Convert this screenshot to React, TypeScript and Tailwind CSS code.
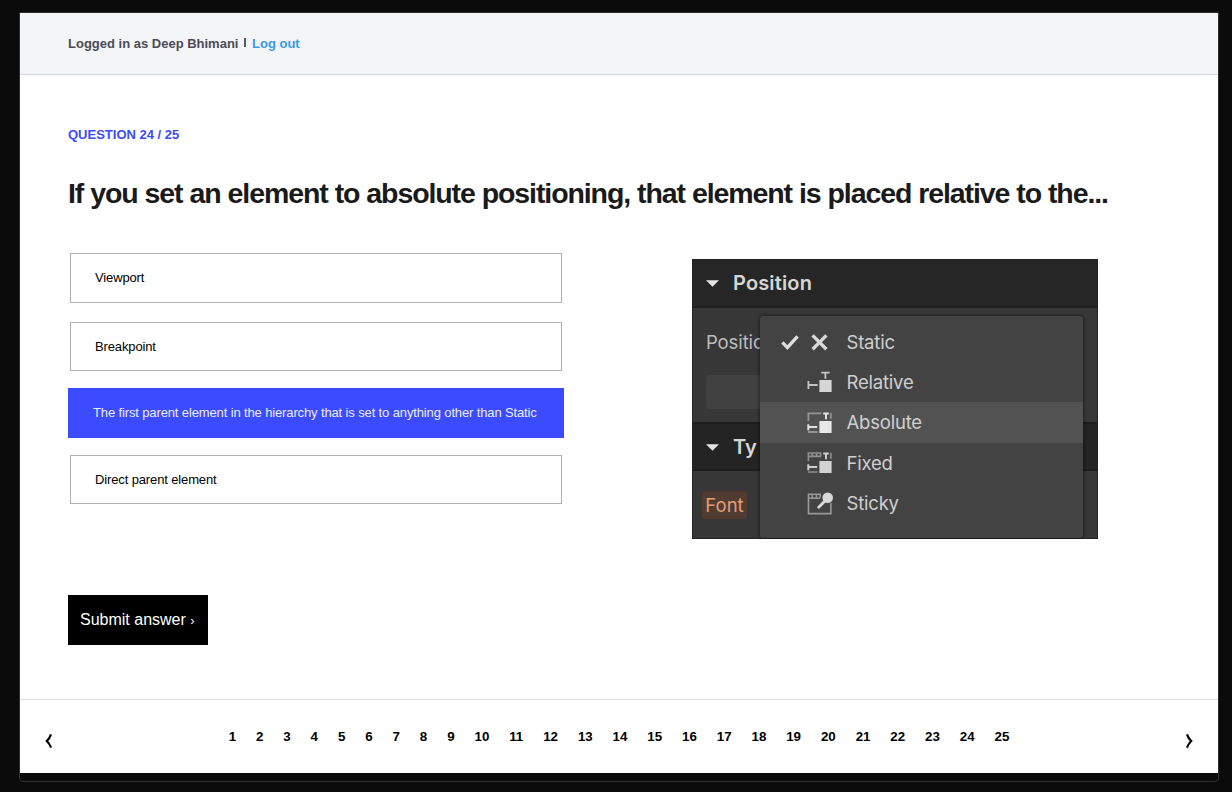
import React from 'react';

const questions = Array.from({ length: 25 }, (_, i) => i + 1);

function RelativeIcon() {
  return (
    <svg width="26" height="24" viewBox="0 0 26 24" fill="none" stroke="#c4c4c4" strokeWidth="1.8">
      <path d="M1.4 10v8M1.2 14h9.4M14.2 1.6h8.4M18.4 1.6v6.2" />
      <rect x="12.4" y="9" width="12.2" height="12" fill="#d6d6d6" stroke="none" />
    </svg>
  );
}

function AbsoluteIcon() {
  return (
    <svg width="26" height="24" viewBox="0 0 26 24" fill="none">
      <path d="M1.4 10V2.3H14.2M1 21h9.6M23.8 1.8v6" stroke="#949494" strokeWidth="1.8" />
      <path d="M1.3 13.2v6M1.2 16h9M16.2 2.4h5.6M19 2.4V8.2" stroke="#e0e0e0" strokeWidth="2" />
      <rect x="12.4" y="10" width="12.2" height="12" fill="#e8e8e8" />
    </svg>
  );
}

function FixedIcon() {
  return (
    <svg width="26" height="24" viewBox="0 0 26 24" fill="none">
      <path d="M1.4 10V2H14.2M1.2 5.4H14.2M5.3 2v3M9.6 2v3M13.6 2v3M1 21h9.6M23.8 1.8v6" stroke="#8f8f8f" strokeWidth="1.7" />
      <path d="M1.3 13.2v6M1.2 16h9M16.2 2.4h5.6M19 2.4V8.2" stroke="#cdcdcd" strokeWidth="2" />
      <rect x="12.4" y="10" width="12.2" height="12" fill="#d2d2d2" />
    </svg>
  );
}

function StickyIcon() {
  return (
    <svg width="26" height="24" viewBox="0 0 26 24" fill="none">
      <path d="M14 2.2H1.5V21.6H23.9V11M1.3 6.2H13M5.3 2.5v3M9.4 2.5v3M13.2 2.5v3" stroke="#989898" strokeWidth="1.6" />
      <path d="M11.7 15.2l7-7" stroke="#d8d8d8" strokeWidth="2.8" strokeLinecap="round" />
      <circle cx="20.7" cy="5.8" r="5.3" fill="#d8d8d8" />
    </svg>
  );
}

function CrossIcon() {
  return (
    <svg width="26" height="24" viewBox="0 0 26 24" fill="none" stroke="#d8d8d8" strokeWidth="3.4">
      <path d="M5.6 4.4l13.8 13.8M19.4 4.4L5.6 18.2" />
    </svg>
  );
}

const options = [
  { label: 'Static', icon: <CrossIcon />, row: 'h-[41px]' },
  { label: 'Relative', icon: <RelativeIcon />, row: 'h-[39px]' },
  { label: 'Absolute', icon: <AbsoluteIcon />, row: 'h-[41px] bg-[#525252]' },
  { label: 'Fixed', icon: <FixedIcon />, row: 'h-[40px]' },
  { label: 'Sticky', icon: <StickyIcon />, row: 'h-[41px]' },
];

function Caret() {
  return (
    <svg width="13" height="7" viewBox="0 0 13 7" className="mt-px shrink-0">
      <path d="M0 0.2h13L6.5 6.8z" fill="#e4e4e4" />
    </svg>
  );
}

function PositionPanel() {
  return (
    <div className="relative mt-[6px] h-[280px] w-[406px] overflow-hidden bg-[#373737] font-['Inter',sans-serif] outline-1 -outline-offset-1 outline-[#242424]">
      <div className="flex h-[49px] items-center gap-[14px] border-b-2 border-[#1f1f1f] bg-[#262626] pl-[14px] text-[20px] font-semibold tracking-[0.15px] text-[#d6d6d6]">
        <Caret />
        <span>Position</span>
      </div>
      <div className="h-[67px] pt-[20px] pl-[14px] text-[18.5px] leading-[28px] tracking-[-0.1px] text-[#bdbdbd]">Position</div>
      <div className="ml-[14px] h-[34px] w-[200px] rounded-[3px] bg-[#414141]" />
      <div className="mt-[13px] flex h-[49px] items-center gap-[14px] border-y-2 border-[#1d1d1d] bg-[#242424] pl-[14px] text-[20px] font-semibold text-[#d6d6d6]">
        <Caret />
        <span className="w-[24px] overflow-hidden">Typography</span>
      </div>
      <div className="mt-[20px] ml-[10px] flex h-[28px] w-[45px] items-center justify-center rounded-[4px] bg-[#523b31] pt-[2px] text-[18.5px] text-[#e0a07a]">Font</div>
      <div className="absolute top-[57px] left-[68px] h-[222px] w-[323px] rounded-[3px] bg-[#434343] pt-[6px] shadow-[0_0_3px_1px_rgba(0,0,0,0.4)]">
        {options.map((option) => (
          <div key={option.label} className={`flex items-center ${option.row}`}>
            <span className="flex w-[47px] justify-end pr-[8px]">
              {option.label === 'Static' && (
                <svg width="18" height="16" viewBox="0 0 18 16" fill="none" stroke="#dedede" strokeWidth="3.4">
                  <path d="M1.4 7.4l5 5.2L16.5 1.4" />
                </svg>
              )}
            </span>
            {option.icon}
            <span className="ml-[13.5px] pt-px text-[18.5px] tracking-[-0.2px] text-[#cfcfcf]">{option.label}</span>
          </div>
        ))}
      </div>
    </div>
  );
}

export default function App() {
  return (
    <div className="h-[792px] w-[1232px] overflow-hidden bg-[#0b0b0b] pt-[12px] pl-[19px] font-['Liberation_Sans',Arial,sans-serif]">
      <div className="h-[770px] w-[1200px] overflow-hidden rounded-t-[1px] rounded-b-[4px] border border-[#303030]">
        <div className="flex h-[760px] flex-col bg-white">
          <header className="flex h-[62px] items-center border-b border-[#d3d6da] bg-[#f4f5f7] pl-[48px] text-[13px] font-bold whitespace-nowrap text-[#4b4b55]">
            <span className="w-[176px]">Logged in as Deep Bhimani</span>
            <span className="mb-[3px] h-[9px] w-[2px] bg-[#5b5b62]" />
            <a href="#" className="ml-[6px] text-[#3898ec]">Log out</a>
          </header>
          <main className="flex h-[624px] flex-col items-start px-[48px] pt-[51px]">
            <p className="text-[13px] leading-[18px] font-bold whitespace-nowrap text-[#3b4bff]">QUESTION 24 / 25</p>
            <h1 className="mt-[28px] h-[44px] text-[28.5px] leading-[43px] font-bold tracking-[-1.1px] [word-spacing:0.2px] whitespace-nowrap text-[#1a1a1a]">
              If you set an element to absolute positioning, that element is placed relative to the...
            </h1>
            <div className="mt-[37px] flex h-[342px] gap-[128px]">
              <div className="w-[496px] text-[13px] tracking-[-0.13px] whitespace-nowrap text-black">
                <div className="mx-[2px] flex h-[50px] items-center border border-[#b1b1b5] pl-[24px]">Viewport</div>
                <div className="mx-[2px] mt-[19px] flex h-[49px] items-center border border-[#b1b1b5] pl-[24px]">Breakpoint</div>
                <div className="mt-[17px] flex h-[50px] items-center bg-[#3b4bff] pl-[25px] text-[#e9ebff]">
                  The first parent element in the hierarchy that is set to anything other than Static
                </div>
                <div className="mx-[2px] mt-[17px] flex h-[49px] items-center border border-[#b1b1b5] pl-[24px]">Direct parent element</div>
              </div>
              <PositionPanel />
            </div>
            <button className="flex h-[50px] w-[140px] items-center bg-black pl-[12px] text-[16px] whitespace-nowrap text-white">
              <span>Submit answer <span className="text-[13px]">›</span></span>
            </button>
          </main>
          <footer className="flex h-[74px] items-start justify-between border-t border-[#dfe2e4] px-[24px] text-black">
            <svg width="10" height="16" viewBox="0 0 10 16" fill="none" stroke="currentColor" className="mt-[33px]">
              <path d="M7 1.3Q5.6 5.4 2.8 8Q5.6 10.6 7 14.7" strokeWidth="2.2" />
            </svg>
            <nav className="mt-[28px] flex gap-[19.9px] text-[13.33px] leading-[18px] font-bold">
              {questions.map((n) => (
                <a key={n} href="#">{n}</a>
              ))}
            </nav>
            <svg width="10" height="16" viewBox="0 0 10 16" fill="none" stroke="currentColor" className="mt-[33px]">
              <path d="M3 1.3Q4.4 5.4 7.2 8Q4.4 10.6 3 14.7" strokeWidth="2.2" />
            </svg>
          </footer>
        </div>
      </div>
    </div>
  );
}
